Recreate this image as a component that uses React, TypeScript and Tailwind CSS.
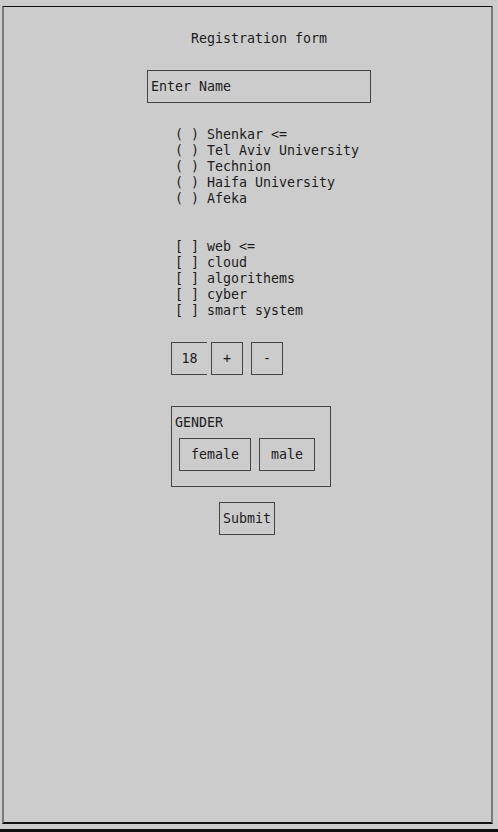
import React from "react";

const mono = { fontFamily: '"DejaVu Sans Mono", "Liberation Mono", monospace' };

export default function App() {
  const unis = ["( ) Shenkar <=", "( ) Tel Aviv University", "( ) Technion", "( ) Haifa University", "( ) Afeka"];
  const topics = ["[ ] web <=", "[ ] cloud", "[ ] algorithems", "[ ] cyber", "[ ] smart system"];
  const box = "h-[33px] border border-[#454545] flex items-center justify-center pt-[1px]";
  return (
    <div
      className="relative w-[498px] h-[832px] bg-[#cccccc] text-[#1c1c1c] text-[13.3px] leading-[16px] overflow-hidden"
      style={mono}
    >
      <div className="ml-[2px] mt-[6px] w-[491px] h-[818px] border-t-[1px] border-t-[#111] border-l-2 border-l-[#7a7a7a] border-r-2 border-r-[#7a7a7a] border-b-2 border-b-[#111] flex flex-col items-start">
        <div className="mt-[23px] ml-[187px] h-[16px] pt-[1px] whitespace-pre">Registration form</div>
        <div className="mt-[24px] ml-[143px] w-[224px] h-[33px] border border-[#454545] pl-[3px] pt-[1px] flex items-center whitespace-pre">
          Enter Name
        </div>
        <div className="mt-[23px] ml-[171px] flex flex-col">
          {unis.map((u) => (
            <div key={u} className="h-[16px] pt-[1px] whitespace-pre">{u}</div>
          ))}
        </div>
        <div className="mt-[32px] ml-[171px] flex flex-col">
          {topics.map((t) => (
            <div key={t} className="h-[16px] pt-[1px] whitespace-pre">{t}</div>
          ))}
        </div>
        <div className="mt-[24px] ml-[167px] flex items-start">
          <div className={`w-[36px] border-r-0 ${box}`}>18</div>
          <div className={`ml-[4px] w-[32px] ${box}`}>+</div>
          <div className={`ml-[8px] w-[32px] ${box}`}>-</div>
        </div>
        <div className="mt-[31px] ml-[167px] w-[160px] h-[81px] border border-[#454545] flex flex-col items-start">
          <div className="mt-[7px] ml-[3px] h-[16px] pt-[1px] whitespace-pre">GENDER</div>
          <div className="mt-[8px] ml-[7px] flex">
            <div className={`w-[72px] ${box}`}>female</div>
            <div className={`ml-[8px] w-[56px] ${box}`}>male</div>
          </div>
        </div>
        <div className={`mt-[15px] ml-[215px] w-[56px] ${box}`}>Submit</div>
      </div>
      <div className="absolute left-0 right-0 bottom-0 h-[3px] bg-[#111]" />
    </div>
  );
}
